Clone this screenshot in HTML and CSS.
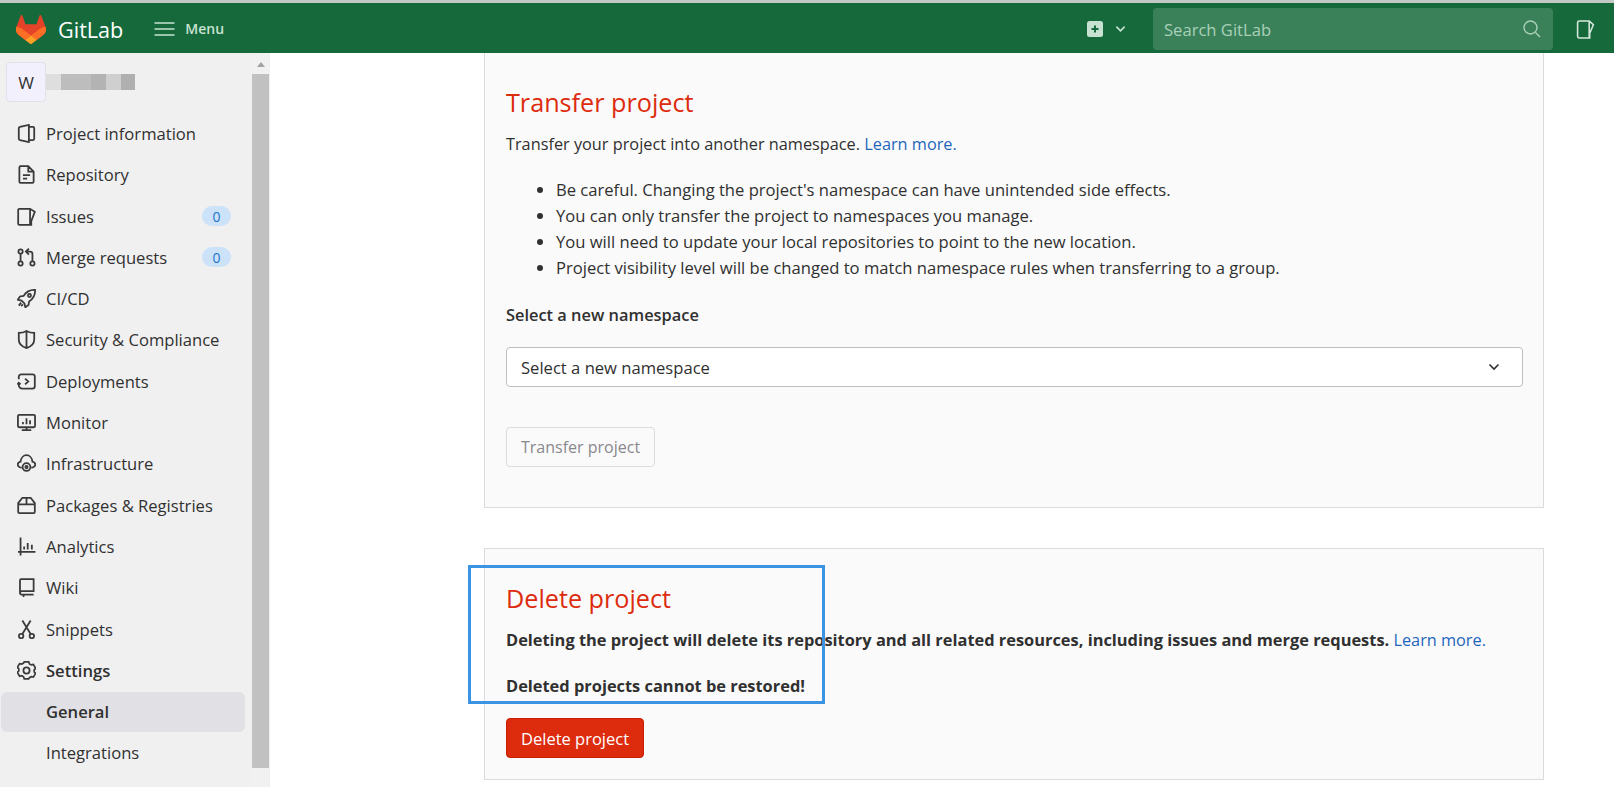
FILE: index.html
```html
<!DOCTYPE html>
<html lang="en">
<head>
    <meta charset="UTF-8">
    <meta name="viewport" content="width=device-width, initial-scale=1.0">
    <title>General · Settings · GitLab</title>
    <link rel="stylesheet" href="styles.css">
</head>
<body>
    <header class="topbar">
        <a class="brand" href="#">
            <svg class="brand-logo" viewBox="0 0 25 24">
                <path d="M24.507 9.5l-.034-.09L21.082.562a.896.896 0 00-1.694.091l-2.29 7.01H7.825L5.535.653a.898.898 0 00-1.694-.09L.451 9.411.416 9.5a6.297 6.297 0 002.09 7.278l.012.01.03.022 5.16 3.867 2.56 1.935 1.554 1.176a1.051 1.051 0 001.268 0l1.555-1.176 2.56-1.935 5.197-3.89.014-.01A6.297 6.297 0 0024.507 9.5z" fill="#E24329"/>
                <path d="M24.507 9.5l-.034-.09a11.44 11.44 0 00-4.56 2.051l-7.447 5.632 4.742 3.584 5.197-3.89.014-.01A6.297 6.297 0 0024.507 9.5z" fill="#FC6D26"/>
                <path d="M7.707 20.677l2.56 1.935 1.555 1.176a1.051 1.051 0 001.268 0l1.555-1.176 2.56-1.935-4.743-3.584-4.755 3.584z" fill="#FCA326"/>
                <path d="M5.01 11.461a11.43 11.43 0 00-4.56-2.05L.416 9.5a6.297 6.297 0 002.09 7.278l.012.01.03.022 5.16 3.867 4.745-3.584-7.444-5.632z" fill="#FC6D26"/>
            </svg>
            <span class="brand-name">GitLab</span>
        </a>
        <a class="menu-btn" href="#">
            <svg class="menu-icon" viewBox="0 0 20 14"><path d="M0 1h20M0 7h20M0 13h20"/></svg>
            <span>Menu</span>
        </a>
        <div class="topbar-right">
            <a class="new-btn" href="#">
                <svg class="new-icon" viewBox="0 0 16 16"><rect width="16" height="16" rx="2.5" fill="#c8e2d2"/><path d="M8 4.500v7M4.500 8h7" stroke="#15693b" stroke-width="2"/></svg>
                <svg class="chevron-small" viewBox="0 0 12 8"><path d="M1.500 1.500L6 6l4.500-4.500"/></svg>
            </a>
            <div class="search">
                <span>Search GitLab</span>
                <svg class="search-icon" viewBox="0 0 18 18"><circle cx="7.500" cy="7.500" r="6.500"/><path d="M12.500 12.500L17 17"/></svg>
            </div>
            <a class="todo" href="#">
                <svg class="todo-icon" viewBox="0 0 18 18"><path d="M3 1h9.500l4 3.500-3.500 8V17H3a1.500 1.500 0 01-1.500-1.500v-13A1.500 1.500 0 013 1zM12.500 1v16"/></svg>
            </a>
        </div>
    </header>

    <div class="layout">
        <aside class="sidebar">
            <div class="sidebar-inner">
                <div class="project-head">
                    <div class="avatar">W</div>
                    <div class="blurred-name"></div>
                </div>
                <ul class="nav-list">
                    <li><a href="#"><svg class="nav-icon" viewBox="0 0 16 16"><path d="M2.500 2.500L10 .8v14.400l-7.500-1.700a1 1 0 01-1-1V3.500a1 1 0 011-1zM10 2.500h3.500a1 1 0 011 1v9a1 1 0 01-1 1H10"/></svg>Project information</a></li>
                    <li><a href="#"><svg class="nav-icon" viewBox="0 0 16 16"><path d="M9.500 1H3a1 1 0 00-1 1v12a1 1 0 001 1h10a1 1 0 001-1V5.500zM9.500 1v4.500H14M5 8.500h6M5 11.500h3.500"/></svg>Repository</a></li>
                    <li><a href="#"><svg class="nav-icon" viewBox="0 0 16 16"><path d="M2 1.500h9l4 2.500-3 8v3H2a1 1 0 01-1-1V2.500a1 1 0 011-1zM11 1.500V15"/></svg>Issues<span class="count">0</span></a></li>
                    <li><a href="#"><svg class="nav-icon" viewBox="0 0 16 16"><circle cx="3" cy="3" r="1.800"/><circle cx="3" cy="13" r="1.800"/><circle cx="13" cy="13" r="1.800"/><path d="M3 5v6M13 11V5a2 2 0 00-2-2H8M10 .5L7.500 3 10 5.500"/></svg>Merge requests<span class="count">0</span></a></li>
                    <li><a href="#"><svg class="nav-icon" viewBox="0 0 16 16"><path d="M15.200.8c-4.200-.3-7.200 1.200-9.700 5L2.500 6.300.6 9l3.200.7 2.500 2.500.7 3.200 2.700-1.900.5-3c3.800-2.500 5.300-5.500 5-9.700zM3.500 11.500L1.500 14M5 13l-1.500 1.500"/><circle cx="10.500" cy="5.500" r="1.300"/></svg>CI/CD</a></li>
                    <li><a href="#"><svg class="nav-icon" viewBox="0 0 16 16"><path d="M8 .8c2 1.200 4 1.700 6.500 1.700V8c0 3.500-2.700 6-6.500 7.200C4.200 14 1.500 11.500 1.500 8V2.500C4 2.500 6 2 8 .8zM8 .8v14.400"/></svg>Security &amp; Compliance</a></li>
                    <li><a href="#"><svg class="nav-icon" viewBox="0 0 16 16"><path d="M1.500 6V4a2 2 0 012-2h9.500a2 2 0 012 2v8a2 2 0 01-2 2H4.500a3 3 0 01-3-3V9M.2 10.500l1.300-1.500 1.500 1.500M6.800 5.500L9.500 8l-2.700 2.500"/></svg>Deployments</a></li>
                    <li><a href="#"><svg class="nav-icon" viewBox="0 0 16 16"><rect x=".8" y="1.500" width="14.400" height="10.500" rx="1"/><path d="M8 12v2.500M4 14.500h8M5 7.500v2M8 4.500v5M11 6v3.500"/></svg>Monitor</a></li>
                    <li><a href="#"><svg class="nav-icon" viewBox="0 0 16 16"><path d="M4 11.500C2 11.500.6 10 .6 8.800c0-1 .9-2 2.400-2.300C3.300 3.200 5.500 1 8 1s4.700 2.200 5 5.500c1.500.3 2.400 1.300 2.400 2.300 0 1.200-1.400 2.700-3.400 2.700"/><circle cx="8" cy="11" r="3.300"/><circle cx="8" cy="11" r="1"/></svg>Infrastructure</a></li>
                    <li><a href="#"><svg class="nav-icon" viewBox="0 0 16 16"><path d="M4.500 1.500h7L15 6v7.500a1 1 0 01-1 1H2a1 1 0 01-1-1V6zM1 7h14M8 1.500V7"/></svg>Packages &amp; Registries</a></li>
                    <li><a href="#"><svg class="nav-icon" viewBox="0 0 16 16"><path d="M3 .5v15M.8 12.500H15.500M6 8v2.500M9 5v5.500M12.500 6.500v4"/></svg>Analytics</a></li>
                    <li><a href="#"><svg class="nav-icon" viewBox="0 0 16 16"><path d="M2.500 12.500V2a1 1 0 011-1H14v10H4a1.700 1.700 0 00-1.500 1.700A1.500 1.500 0 004 14h10M5.500 14v2"/></svg>Wiki</a></li>
                    <li><a href="#"><svg class="nav-icon" viewBox="0 0 16 16"><circle cx="3.500" cy="13.500" r="1.900"/><circle cx="12.500" cy="13.500" r="1.900"/><path d="M4.500 11.800L11.500.5M11.500 11.800L4.500.5"/></svg>Snippets</a></li>
                    <li class="nav-parent"><a href="#"><svg class="nav-icon" viewBox="0 0 16 16"><path d="M6 1h4l.6 1.800 1.600.9 1.900-.4 2 3.400-1.300 1.300v1.800l1.300 1.300-2 3.400-1.900-.4-1.600.9L10 16H6l-.6-1.800-1.600-.9-1.900.4-2-3.400 1.300-1.300V7.200L-.1 5.900l2-3.400 1.900.4 1.600-.9z" transform="translate(.4 -.2) scale(.95)"/><circle cx="8" cy="8" r="2.600"/></svg>Settings</a></li>
                    <li class="nav-active"><a href="#">General</a></li>
                    <li><a class="nav-sub" href="#">Integrations</a></li>
                    <li><a class="nav-sub" href="#">Webhooks</a></li>
                </ul>
            </div>
            <div class="scrollbar">
                <div class="scroll-arrow"></div>
                <div class="scroll-thumb"></div>
            </div>
        </aside>

        <main class="content">
            <section class="card card-cut">
                <h4 class="danger-title">Transfer project</h4>
                <p class="card-text">Transfer your project into another namespace. <a href="#">Learn more.</a></p>
                <ul class="card-list">
                    <li>Be careful. Changing the project's namespace can have unintended side effects.</li>
                    <li>You can only transfer the project to namespaces you manage.</li>
                    <li>You will need to update your local repositories to point to the new location.</li>
                    <li>Project visibility level will be changed to match namespace rules when transferring to a group.</li>
                </ul>
                <label class="field-label">Select a new namespace</label>
                <div class="select-box">
                    <span>Select a new namespace</span>
                    <svg class="select-chevron" viewBox="0 0 12 8"><path d="M1.500 1.500L6 6l4.500-4.500"/></svg>
                </div>
                <button class="btn btn-disabled">Transfer project</button>
            </section>

            <section class="card">
                <h4 class="danger-title">Delete project</h4>
                <p class="card-text"><strong>Deleting the project will delete its repository and all related resources, including issues and merge requests.</strong> <a href="#">Learn more.</a></p>
                <p class="card-text card-warning"><strong>Deleted projects cannot be restored!</strong></p>
                <button class="btn btn-danger">Delete project</button>
            </section>
        </main>
    </div>

    <!-- blue box drawn over the screenshot -->
    <div class="annotation"></div>
</body>
</html>
```

FILE: styles.css
```css
* {
    box-sizing: border-box;
}

html, body {
    height: 100%;
}

body {
    margin: 0;
    font-family: "Open Sans", "Noto Sans", sans-serif;
    font-size: 16.6px;
    color: #303030;
    background-color: #fff;
    display: flex;
    flex-direction: column;
    overflow: hidden;
    position: relative;
}

a {
    text-decoration: none;
    color: inherit;
}

/* Top bar */
.topbar {
    flex: none;
    height: 53px;
    border-top: 3px solid #c4c8c5;
    padding-top: 2px;
    background-color: #15693b;
    display: flex;
    align-items: center;
    padding-left: 16px;
    color: #d5e7dc;
}

.brand {
    display: flex;
    align-items: center;
}

.brand-logo {
    width: 30px;
    height: 29px;
}

.brand-name {
    margin-left: 12px;
    font-size: 21.6px;
    color: #fff;
}

.menu-btn {
    margin-left: 31px;
    display: flex;
    align-items: center;
    font-size: 14px;
    font-weight: 600;
    color: #c8e2d2;
}

.menu-btn span {
    margin-top: -2px;
}

.menu-icon {
    width: 21px;
    height: 14px;
    margin-right: 10px;
    fill: none;
    stroke: #c8e2d2;
    stroke-width: 1.6;
}

.topbar-right {
    margin-left: auto;
    display: flex;
    align-items: center;
}

.new-btn {
    display: flex;
    align-items: center;
}

.new-icon {
    width: 16px;
    height: 16px;
}

.chevron-small {
    width: 11px;
    height: 8px;
    margin-left: 12px;
    fill: none;
    stroke: #c8e2d2;
    stroke-width: 1.8;
}

.search {
    width: 400px;
    height: 42px;
    margin-left: 27px;
    padding: 0 12px 0 11px;
    background-color: #3a8159;
    border-radius: 4px;
    display: flex;
    align-items: center;
    justify-content: space-between;
    color: #a9d0b9;
}

.search-icon {
    width: 18px;
    height: 18px;
    fill: none;
    stroke: #a9d0b9;
    stroke-width: 1.4;
}

.todo {
    margin: 0 19px 0 23px;
    display: flex;
}

.todo-icon {
    width: 19px;
    height: 19px;
    fill: none;
    stroke: #d5e7dc;
    stroke-width: 1.5;
}

/* Sidebar + content */
.layout {
    flex: 1;
    display: flex;
    min-height: 0;
}

.sidebar {
    flex: none;
    width: 270px;
    background-color: #f0f0f0;
    display: flex;
    overflow: hidden;
}

.sidebar-inner {
    flex: none;
    width: 252px;
    padding: 0 7px 0 1px;
}

.project-head {
    height: 60.5px;
    display: flex;
    align-items: center;
    padding-left: 5px;
}

.avatar {
    width: 40px;
    height: 40px;
    background-color: #f3f0fd;
    border: 1px solid #e2e0ea;
    border-radius: 4px;
    display: flex;
    align-items: center;
    justify-content: center;
    font-size: 17px;
    margin-top: -2px;
}

.blurred-name {
    width: 89px;
    height: 16px;
    margin-top: -2px;
    background: linear-gradient(90deg,
        #dedede 0 15px, #bdbdbd 15px 45px, #b3b3b3 45px 60px,
        #cfcfcf 60px 75px, #b0b0b0 75px 89px);
}

.nav-list {
    list-style: none;
    margin: 0;
    padding: 0;
}

.nav-list li {
    height: 41.3px;
}

.nav-list a {
    height: 40px;
    display: flex;
    align-items: center;
    padding: 0 16px;
    border-radius: 6px;
}

.nav-icon {
    flex: none;
    width: 19px;
    height: 19px;
    margin-right: 10px;
    fill: none;
    stroke: #3a3a3a;
    stroke-width: 1.5;
}

.nav-list a.nav-sub {
    padding-left: 45px;
}

.count {
    margin-left: auto;
    margin-right: -2px;
    width: 29px;
    height: 20px;
    border-radius: 10px;
    background-color: #cbe2f9;
    color: #1f75cb;
    font-size: 14px;
    display: flex;
    align-items: center;
    justify-content: center;
}

.nav-parent a {
    font-weight: 600;
}

.nav-list .nav-active a {
    padding-left: 45px;
    font-weight: 600;
    background-color: #e1e1e5;
    color: #303030;
}

.scrollbar {
    flex: none;
    width: 17px;
    background-color: #f1f1f1;
}

.scroll-arrow {
    width: 0;
    height: 0;
    margin: 9px auto 7px;
    border-left: 4.5px solid transparent;
    border-right: 4.5px solid transparent;
    border-bottom: 5px solid #a3a3a3;
}

.scroll-thumb {
    height: 694px;
    background-color: #c1c1c1;
}

.content {
    flex: 1;
    padding-left: 214px;
    padding-right: 70px;
    min-width: 0;
}

.card {
    height: 232px;
    padding: 0 20px 0 21px;
    background-color: #fafafa;
    border: 1px solid #dbdbdb;
}

.card-cut {
    height: 455px;
    border-top: 0;
    margin-bottom: 40px;
}

.danger-title {
    margin: 0;
    padding-top: 29px;
    font-size: 25.2px;
    line-height: 40px;
    font-weight: 500;
    color: #dd2b0e;
}

.card-text {
    margin: 0;
    padding-top: 10px;
    line-height: 24px;
    font-size: 16.3px;
}

.card-text a {
    color: #1f66bd;
}

.card-warning {
    padding-top: 22px;
}

.card-text strong {
    font-weight: 700;
    font-size: 16.4px;
}

.field-label {
    display: block;
    margin-top: 22px;
    line-height: 24px;
    font-size: 16.4px;
    font-weight: 600;
}

.card-list {
    margin: 21px 0 0;
    padding-left: 50px;
    line-height: 26px;
}

.select-box {
    margin-top: 20px;
    height: 40px;
    padding: 0 14px;
    background-color: #fff;
    border: 1px solid #bfbfbf;
    border-radius: 4px;
    display: flex;
    align-items: center;
    justify-content: space-between;
}

.select-chevron {
    width: 12px;
    height: 8px;
    margin-right: 8px;
    fill: none;
    stroke: #303030;
    stroke-width: 1.6;
}

.btn {
    display: block;
    font: inherit;
    height: 40px;
    padding: 0 14px;
    border-radius: 4px;
}

.btn-disabled {
    margin-top: 40px;
    font-size: 16px;
    color: #89888d;
    background-color: #fafafa;
    border: 1px solid #dcdcde;
}

.btn-danger {
    margin-top: 20px;
    font-size: 16.5px;
    color: #fff;
    background-color: #dd2b0e;
    border: 1px solid #c91c00;
}

/* Blue rectangle over the page, not part of the app */
.annotation {
    position: absolute;
    left: 468px;
    top: 565px;
    width: 357px;
    height: 139px;
    border: 3.5px solid #3a94e3;
    pointer-events: none;
}
```
